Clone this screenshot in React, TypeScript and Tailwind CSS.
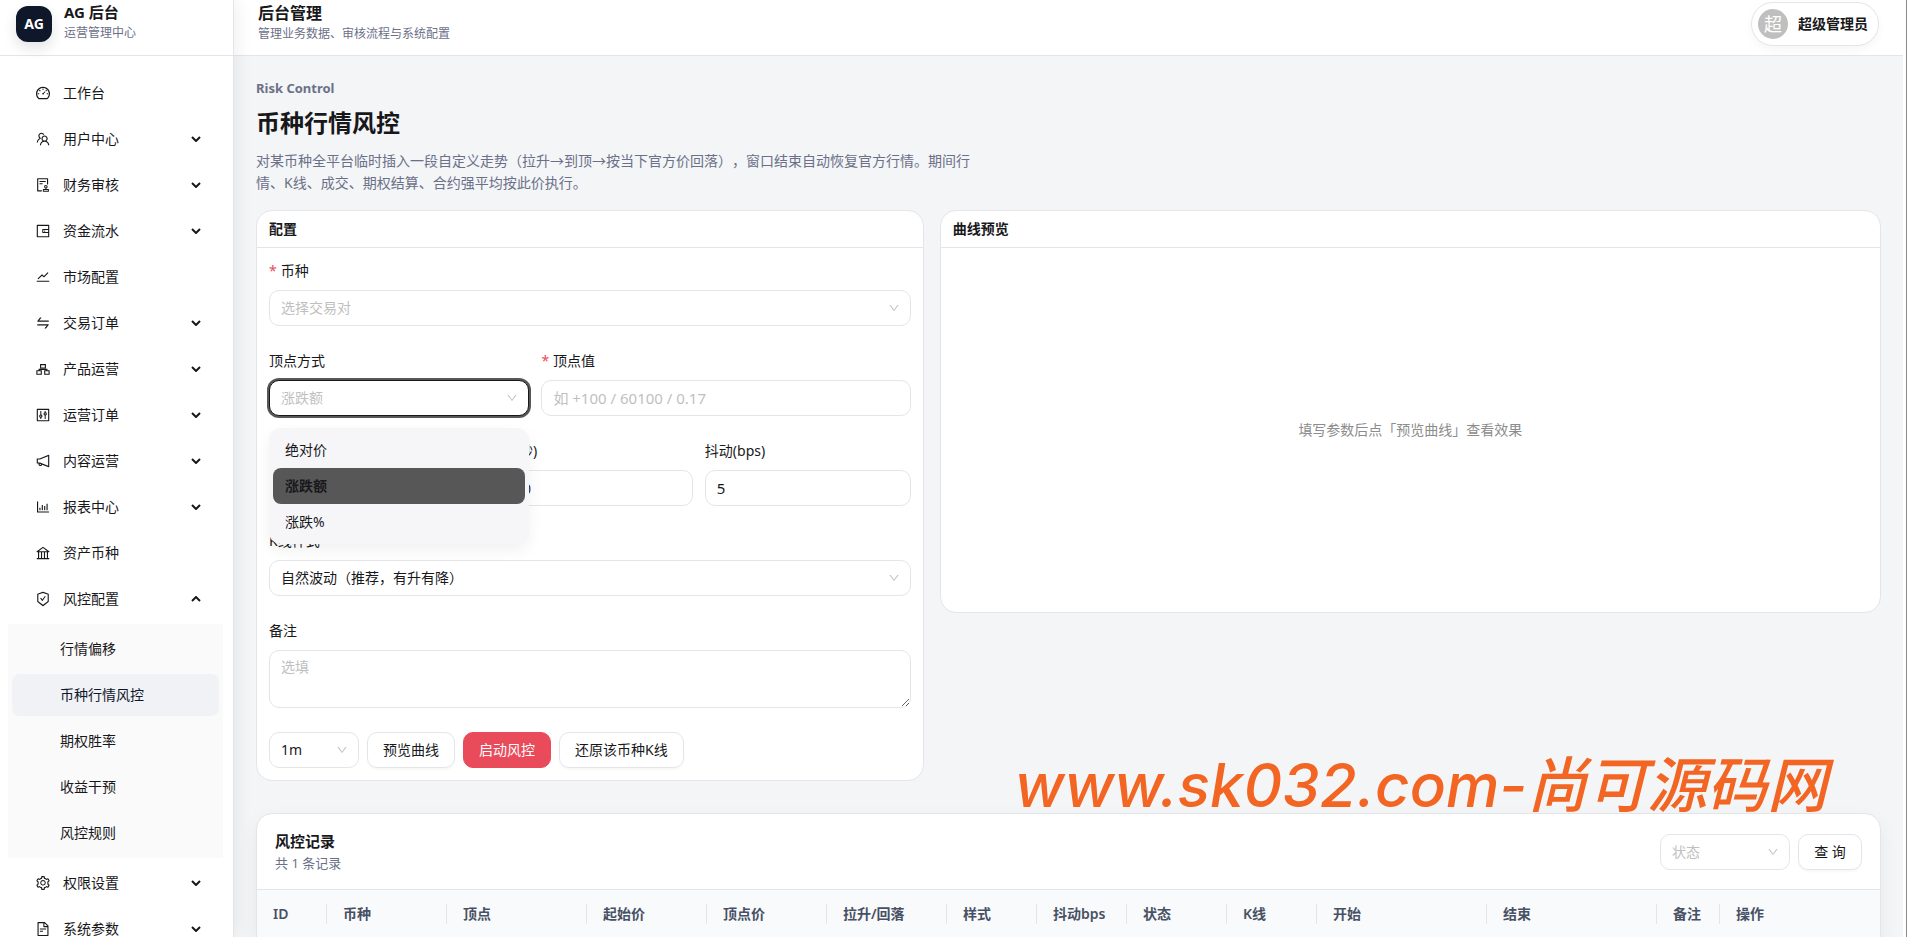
import React from 'react';
import {
  AiOutlineDashboard, AiOutlineTeam, AiOutlineAudit, AiOutlineWallet, AiOutlineStock, AiOutlineSwap,
  AiOutlineControl, AiOutlineNotification, AiOutlineBarChart, AiOutlineBank,
  AiOutlineSafetyCertificate, AiOutlineSetting, AiOutlineFileText, AiOutlineDown,
} from 'react-icons/ai';

interface MenuItem {
  label: string;
  icon: React.ReactNode;
  arrow?: boolean;
  children?: string[];
}

const BoxesIcon = () => (
  <svg viewBox="0 0 16 16" className="size-4" fill="none" stroke="currentColor" strokeWidth="1.1">
    <path d="M5.6 3.6h4.8v3.4H5.6zM1.9 9.8h4.4v3.4H1.9zM9.7 9.8h4.4v3.4H9.7zM4.1 9.8V8.4h7.8v1.4" />
  </svg>
);

const menu: MenuItem[] = [
  { label: '工作台', icon: <AiOutlineDashboard /> },
  { label: '用户中心', icon: <AiOutlineTeam />, arrow: true },
  { label: '财务审核', icon: <AiOutlineAudit />, arrow: true },
  { label: '资金流水', icon: <AiOutlineWallet />, arrow: true },
  { label: '市场配置', icon: <AiOutlineStock /> },
  { label: '交易订单', icon: <AiOutlineSwap />, arrow: true },
  { label: '产品运营', icon: <BoxesIcon />, arrow: true },
  { label: '运营订单', icon: <AiOutlineControl />, arrow: true },
  { label: '内容运营', icon: <AiOutlineNotification />, arrow: true },
  { label: '报表中心', icon: <AiOutlineBarChart />, arrow: true },
  { label: '资产币种', icon: <AiOutlineBank /> },
  {
    label: '风控配置',
    icon: <AiOutlineSafetyCertificate />,
    arrow: true,
    children: ['行情偏移', '币种行情风控', '期权胜率', '收益干预', '风控规则'],
  },
  { label: '权限设置', icon: <AiOutlineSetting />, arrow: true },
  { label: '系统参数', icon: <AiOutlineFileText />, arrow: true },
];

const columns = [
  { title: 'ID', width: 'w-[70px]' },
  { title: '币种', width: 'w-[120px]' },
  { title: '顶点', width: 'w-[140px]' },
  { title: '起始价', width: 'w-[120px]' },
  { title: '顶点价', width: 'w-[120px]' },
  { title: '拉升/回落', width: 'w-[120px]' },
  { title: '样式', width: 'w-[90px]' },
  { title: '抖动bps', width: 'w-[90px]' },
  { title: '状态', width: 'w-[100px]' },
  { title: 'K线', width: 'w-[90px]' },
  { title: '开始', width: 'w-[170px]' },
  { title: '结束', width: 'w-[170px]' },
  { title: '备注', width: 'w-[63px]' },
  { title: '操作', width: 'w-auto' },
];

const control = 'block h-9 w-full rounded-[10px] border bg-white px-[11px] outline-none placeholder:text-[#bfbfbf]';
const input = `${control} border-[#e4e5e8] text-[15px]`;

const Chevron = ({ up = false }: { up?: boolean }) => (
  <svg viewBox="0 0 10 6" className="h-[6px] w-[10px]" fill="none" stroke="currentColor" strokeWidth="2">
    {up ? <path d="M1 5l4-4 4 4" /> : <path d="M1 1l4 4 4-4" />}
  </svg>
);

interface SelectProps {
  id: string;
  value: string;
  muted?: boolean;
  focused?: boolean;
  options?: string[];
}

const Select = ({ id, value, muted, focused, options = [] }: SelectProps) => (
  <div className="relative">
    <select
      id={id}
      aria-label={value}
      defaultValue={value}
      className={`${control} appearance-none text-sm ${muted ? 'text-[#bfbfbf]' : 'text-[#18181b]'} ${
        focused ? 'border-[#18181b] ring-2 ring-[#575757]' : 'border-[#e4e5e8]'
      }`}
    >
      <option>{value}</option>
      {options.map((o) => (
        <option key={o}>{o}</option>
      ))}
    </select>
    <AiOutlineDown className="pointer-events-none absolute top-3 right-[11px] size-3 text-[#bfbfbf]" />
  </div>
);

interface FieldProps {
  id: string;
  label: string;
  required?: boolean;
  className?: string;
  children: React.ReactNode;
}

const Field = ({ id, label, required, className = '', children }: FieldProps) => (
  <div className={`relative ${className}`}>
    <label htmlFor={id} className="mb-2 flex h-[22px] items-center gap-1 text-sm">
      {required && <span className="text-[#e94b5b]">*</span>}
      {label}
    </label>
    {children}
  </div>
);

const Sidebar = () => (
  <aside className="z-10 w-[234px] shrink-0 overflow-hidden border-r border-[#e4e5e8] bg-white shadow-[4px_0_16px_rgba(15,23,42,0.06)]">
    <div className="flex h-14 items-center gap-3 border-b border-[#e4e5e8] px-4 pb-2">
      <div className="flex size-9 items-center justify-center rounded-xl bg-[#0f172a] text-sm font-bold text-white shadow-[0_6px_14px_rgba(15,23,42,0.12)]">
        AG
      </div>
      <div className="pb-[3px]">
        <div className="text-[15px] leading-[22px] font-bold">AG 后台</div>
        <div className="text-xs leading-5 text-[#6b7088]">运营管理中心</div>
      </div>
    </div>
    <nav className="flex flex-col gap-1 pt-4 pr-[10px] pl-2">
      {menu.map((item) => (
        <React.Fragment key={item.label}>
          <a href="#" className="flex h-[42px] shrink-0 items-center gap-3 pr-[22px] pl-[27px] text-sm">
            <span className="text-base">{item.icon}</span>
            <span className="flex-1">{item.label}</span>
            {item.arrow && <Chevron up={!!item.children} />}
          </a>
          {item.children && (
            <div className="flex flex-col gap-1 bg-[#fafafa] p-1">
              {item.children.map((child) => (
                <a
                  key={child}
                  href="#"
                  className={`flex h-[42px] items-center rounded-lg pl-12 text-sm ${
                    child === '币种行情风控' ? 'bg-[#f0f2f6] text-[#0f172a]' : ''
                  }`}
                >
                  {child}
                </a>
              ))}
            </div>
          )}
        </React.Fragment>
      ))}
    </nav>
  </aside>
);

const Header = () => (
  <header className="flex h-14 items-center justify-between border-b border-[#e4e5e8] bg-white pr-7 pb-2 pl-6">
    <div className="pb-px">
      <div className="text-base leading-[22px] font-semibold">后台管理</div>
      <div className="text-xs leading-5 text-[#6b7088]">管理业务数据、审核流程与系统配置</div>
    </div>
    <button className="flex h-11 items-center gap-[10px] rounded-full border border-[#e4e5e8] bg-white pr-[10px] pl-[6px] text-sm font-semibold shadow-[0_4px_10px_rgba(15,23,42,0.04)]">
      <span className="flex size-[30px] items-center justify-center rounded-full bg-[#bfbfbf] text-lg font-normal text-white">超</span>
      超级管理员
    </button>
  </header>
);

const ConfigForm = () => (
  <section className="col-span-5 rounded-2xl border border-[#e4e5e8] bg-white">
    <h2 className="flex h-[37px] items-center border-b border-[#e4e5e8] px-3 text-sm font-semibold">配置</h2>
    <form className="flex flex-col gap-6 p-3">
      <Field id="symbol" label="币种" required>
        <Select id="symbol" value="选择交易对" muted />
      </Field>
      <div className="grid grid-cols-12 gap-3">
        <Field id="mode" label="顶点方式" className="col-span-5">
          <Select id="mode" value="涨跌额" muted focused options={['绝对价', '涨跌%']} />
          <ul role="listbox" className="absolute top-full z-10 mt-3 w-full rounded-xl bg-[#f6f6f8] p-1 text-sm shadow-[0_6px_16px_rgba(0,0,0,0.06)]">
            <li role="option" className="flex h-9 items-center px-3">绝对价</li>
            <li role="option" aria-selected="true" className="flex h-9 items-center rounded-lg bg-[#575757] px-3 font-semibold">涨跌额</li>
            <li role="option" className="flex h-9 items-center px-3">涨跌%</li>
          </ul>
        </Field>
        <Field id="peak" label="顶点值" required className="col-span-7">
          <input id="peak" className={input} placeholder="如 +100 / 60100 / 0.17" />
        </Field>
      </div>
      <div className="grid grid-cols-3 gap-3">
        <Field id="rise" label="拉升(秒)">
          <input id="rise" className={input} defaultValue="600" />
        </Field>
        <Field id="fall" label="回落(秒)">
          <input id="fall" className={`${control} border-[#e4e5e8] text-sm`} defaultValue="1800" />
        </Field>
        <Field id="jitter" label="抖动(bps)">
          <input id="jitter" className={input} defaultValue="5" />
        </Field>
      </div>
      <Field id="style" label="K线样式">
        <Select id="style" value="自然波动（推荐，有升有降）" />
      </Field>
      <Field id="remark" label="备注">
        <textarea
          id="remark"
          placeholder="选填"
          className="block h-[58px] w-full resize-y rounded-[10px] border border-[#e4e5e8] bg-white px-[11px] py-[6px] text-sm outline-none placeholder:text-[#bfbfbf]"
        />
      </Field>
      <div className="flex gap-2">
        <div className="w-[90px]">
          <Select id="interval" value="1m" />
        </div>
        <button type="button" className="h-9 rounded-[10px] border border-[#e4e5e8] px-[15px] text-sm shadow-[0_2px_2px_rgba(0,0,0,0.03)]">预览曲线</button>
        <button type="button" className="h-9 rounded-[10px] border border-[#e94b5b] bg-[#e94b5b] px-[15px] text-sm text-white">启动风控</button>
        <button type="button" className="h-9 rounded-[10px] border border-[#e4e5e8] px-[15px] text-sm shadow-[0_2px_2px_rgba(0,0,0,0.03)]">还原该币种K线</button>
      </div>
    </form>
  </section>
);

const Records = () => (
  <section className="mt-8 overflow-hidden rounded-t-2xl border border-[#e4e5e8] bg-white shadow-[0_8px_20px_rgba(15,23,42,0.06)]">
    <div className="flex h-[76px] items-center justify-between border-b border-[#e4e5e8] px-[18px]">
      <div>
        <h2 className="text-[15px] leading-[22px] font-semibold">风控记录</h2>
        <p className="text-[13px] leading-[22px] text-[#6b7088]">共 1 条记录</p>
      </div>
      <div className="flex gap-2">
        <div className="w-[130px]">
          <Select id="status" value="状态" muted />
        </div>
        <button className="h-9 w-16 rounded-[10px] border border-[#e4e5e8] text-sm shadow-[0_2px_2px_rgba(0,0,0,0.03)]">查 询</button>
      </div>
    </div>
    <table className="w-full table-fixed text-left text-sm text-[#475163]">
      <thead>
        <tr className="bg-[#f9fafc]">
          {columns.map((col, i) => (
            <th key={col.title} className={`h-12 p-0 font-semibold ${col.width}`}>
              <div className={`flex h-5 items-center pl-4 ${i < columns.length - 1 ? 'border-r border-[#e4e5e8]' : ''}`}>
                {col.title}
              </div>
            </th>
          ))}
        </tr>
      </thead>
    </table>
  </section>
);

export default function App() {
  return (
    <div className="relative flex h-screen overflow-hidden bg-[#f3f5f7] font-['Noto_Sans','Noto_Sans_CJK_SC',sans-serif] text-[#18181b]">
      <Sidebar />
      <div className="min-w-0 flex-1">
        <Header />
        <main className="pt-6 pr-[26px] pl-[22px]">
          <p className="text-[13px] leading-4 font-bold text-[#6b7088]">Risk Control</p>
          <h1 className="mt-3 text-2xl leading-[30px] font-bold">币种行情风控</h1>
          <p className="mt-3 max-w-[720px] text-sm leading-[22px] text-[#6b7088] [text-spacing-trim:space-all]">
            对某币种全平台临时插入一段自定义走势（拉升→到顶→按当下官方价回落），窗口结束自动恢复官方行情。期间行情、K线、成交、期权结算、合约强平均按此价执行。
          </p>
          <div className="mt-4 grid grid-cols-12 items-start gap-4">
            <ConfigForm />
            <section className="col-span-7 rounded-2xl border border-[#e4e5e8] bg-white">
              <h2 className="flex h-[37px] items-center border-b border-[#e4e5e8] px-3 text-sm font-semibold">曲线预览</h2>
              <div className="flex min-h-[364px] items-center justify-center text-sm text-[#8c8c8c]">
                填写参数后点「预览曲线」查看效果
              </div>
            </section>
          </div>
          <Records />
        </main>
      </div>
      {/* scrollbar */}
      <div className="absolute inset-y-0 right-0 w-1 border-r border-[#8b8b8b] bg-white" />
      {/* site watermark, floats over the page */}
      <div className="pointer-events-none absolute right-20 bottom-[108px] z-20 font-['Inter','Noto_Sans_CJK_SC',sans-serif] text-[60px] leading-[88px] font-medium whitespace-nowrap text-[#f26522] italic">
        www.sk032.com-尚可源码网
      </div>
    </div>
  );
}
